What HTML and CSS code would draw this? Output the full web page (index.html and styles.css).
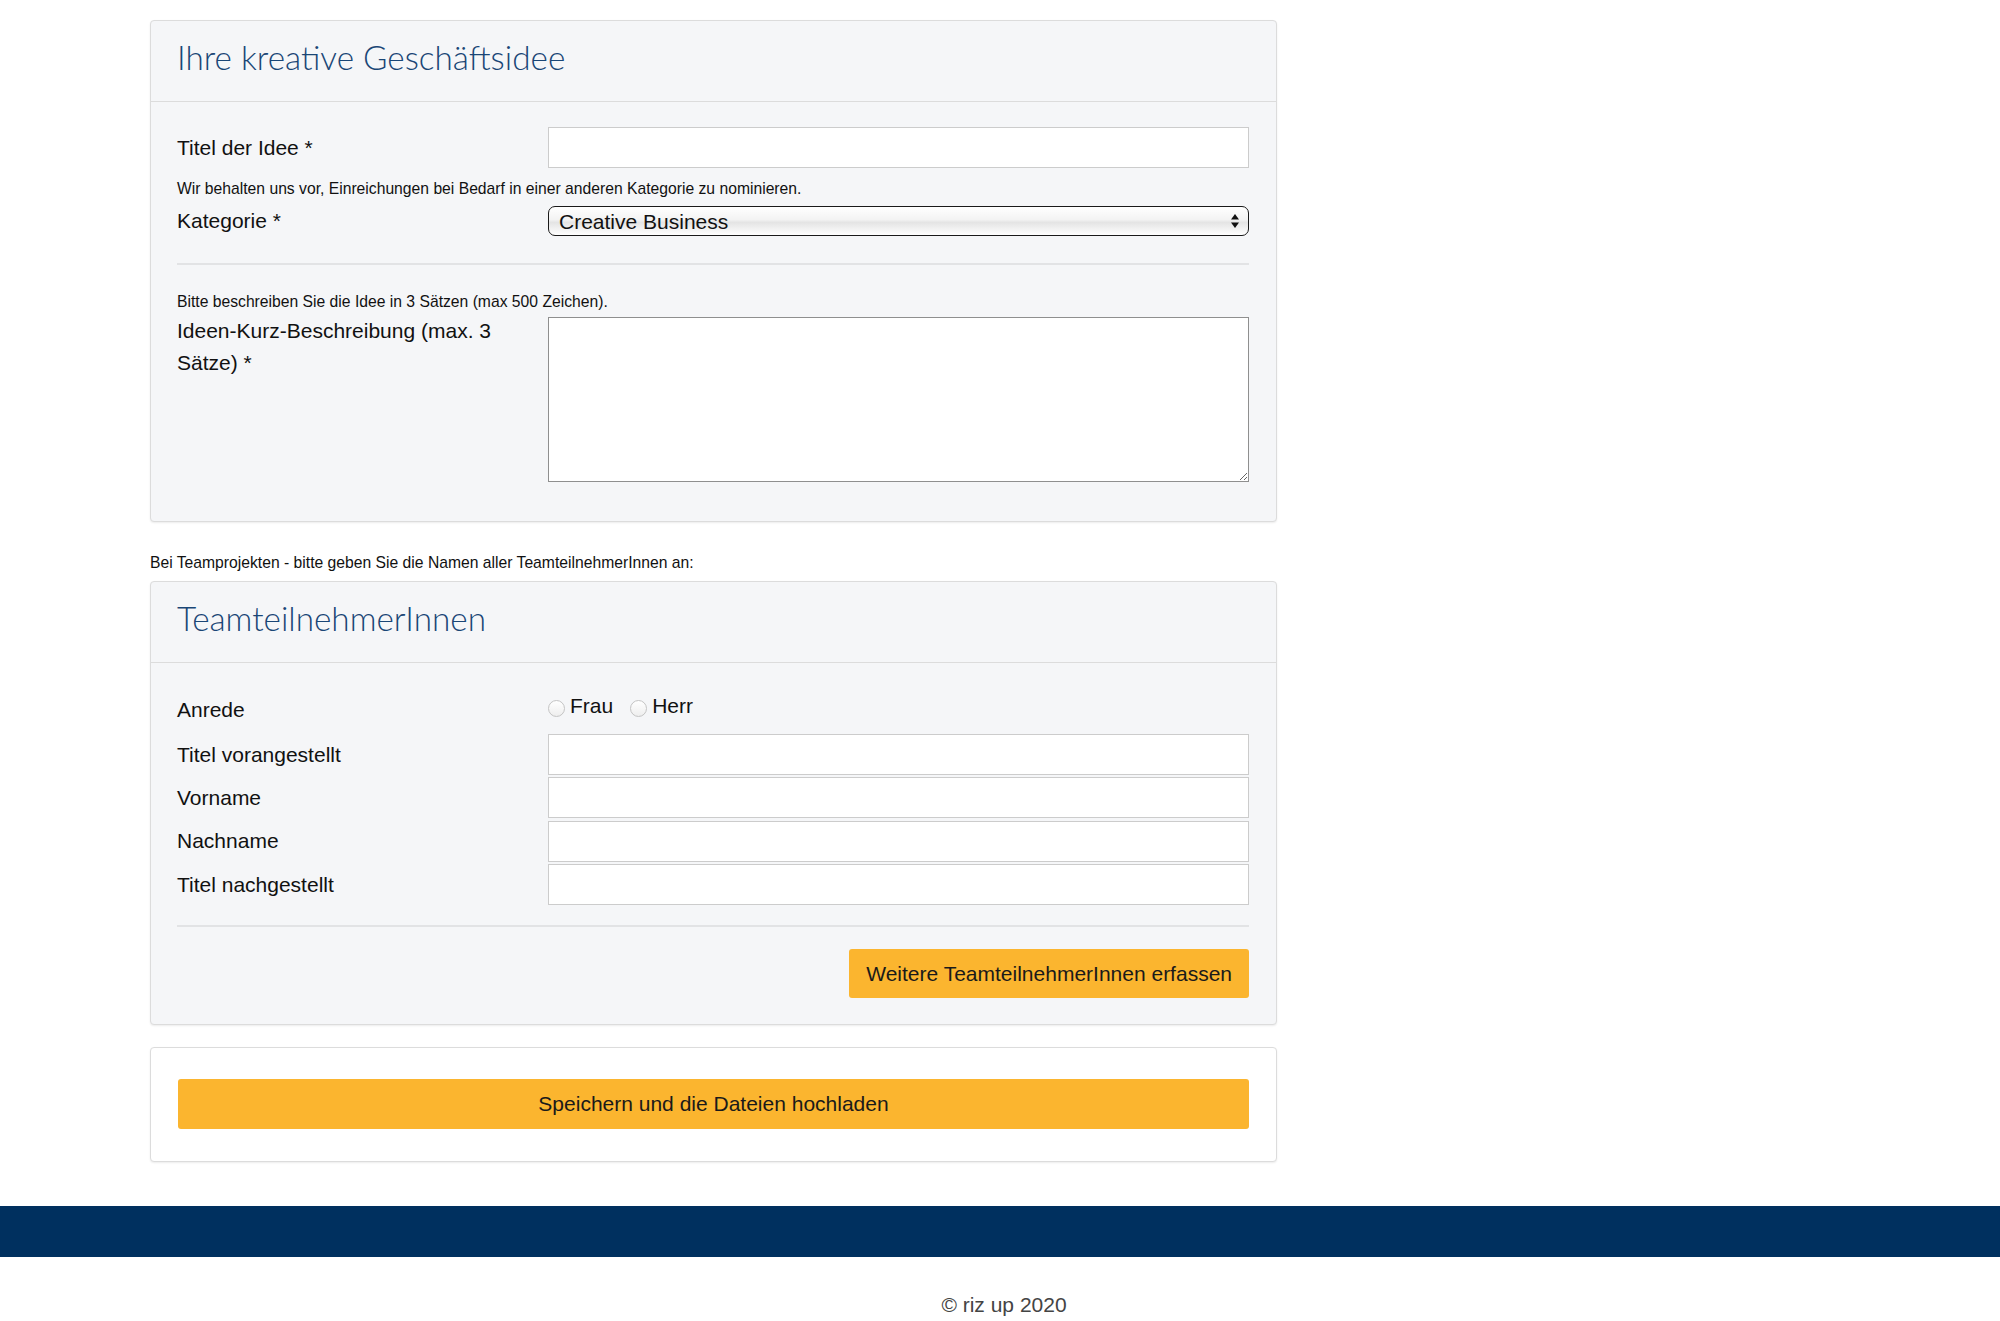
FILE: index.html
```html
<!DOCTYPE html>
<html lang="de">
<head>
    <meta charset="UTF-8">
    <meta name="viewport" content="width=device-width, initial-scale=1.0">
    <title>Ihre kreative Geschäftsidee</title>
    <link rel="stylesheet" href="styles.css">
</head>
<body>
    <div class="page">
        <!-- Idee -->
        <div class="panel">
            <div class="panel-heading">
                <h2>Ihre kreative Geschäftsidee</h2>
            </div>
            <div class="panel-body">
                <div class="form-row">
                    <label class="form-label">Titel der Idee *</label>
                    <input class="form-input" type="text">
                </div>
                <p class="hint hint-category">Wir behalten uns vor, Einreichungen bei Bedarf in einer anderen Kategorie zu nominieren.</p>
                <div class="form-row">
                    <label class="form-label">Kategorie *</label>
                    <div class="select-wrap">
                        <select class="form-select">
                            <option>Creative Business</option>
                        </select>
                        <svg class="select-arrows" width="10" height="16" viewBox="0 0 10 16">
                            <path d="M5 1 L9 6.5 L1 6.5 Z" fill="#111"/>
                            <path d="M5 15 L9 9.5 L1 9.5 Z" fill="#111"/>
                        </svg>
                    </div>
                </div>
                <hr class="divider">
                <p class="hint hint-text">Bitte beschreiben Sie die Idee in 3 Sätzen (max 500 Zeichen).</p>
                <div class="form-row form-row-top">
                    <label class="form-label">Ideen-Kurz-Beschreibung (max. 3 Sätze) *</label>
                    <textarea class="form-textarea"></textarea>
                </div>
            </div>
        </div>

        <p class="team-note">Bei Teamprojekten - bitte geben Sie die Namen aller TeamteilnehmerInnen an:</p>

        <!-- Team -->
        <div class="panel">
            <div class="panel-heading">
                <h2>TeamteilnehmerInnen</h2>
            </div>
            <div class="panel-body panel-body-team">
                <div class="form-row form-row-radio">
                    <label class="form-label">Anrede</label>
                    <div class="radio-group">
                        <label class="radio"><input type="radio" name="anrede">Frau</label>
                        <label class="radio"><input type="radio" name="anrede">Herr</label>
                    </div>
                </div>
                <div class="input-stack">
                    <div class="form-row">
                        <label class="form-label">Titel vorangestellt</label>
                        <input class="form-input" type="text">
                    </div>
                    <div class="form-row">
                        <label class="form-label">Vorname</label>
                        <input class="form-input" type="text">
                    </div>
                    <div class="form-row">
                        <label class="form-label">Nachname</label>
                        <input class="form-input" type="text">
                    </div>
                    <div class="form-row">
                        <label class="form-label">Titel nachgestellt</label>
                        <input class="form-input" type="text">
                    </div>
                </div>
                <hr class="divider divider-team">
                <div class="actions">
                    <button class="btn">Weitere TeamteilnehmerInnen erfassen</button>
                </div>
            </div>
        </div>

        <!-- Speichern -->
        <div class="panel panel-save">
            <button class="btn btn-block">Speichern und die Dateien hochladen</button>
        </div>
    </div>

    <div class="footer-band"></div>
    <p class="copyright">© riz up 2020</p>
</body>
</html>
```

FILE: styles.css
```css
body {
    margin: 0;
    padding: 0;
    background-color: #ffffff;
    color: #111;
    font-family: "Liberation Sans", Arial, sans-serif;
}

.page {
    width: 1127px;
    margin-left: 150px;
    padding-top: 20px;
}

.panel {
    background-color: #f5f6f8;
    border: 1px solid #dcdcdc;
    border-radius: 4px;
    box-shadow: 0 1px 2px rgba(0, 0, 0, 0.08);
}

.panel-heading {
    display: flex;
    align-items: center;
    padding: 0 26px;
    border-bottom: 1px solid #dcdcdc;
    box-sizing: border-box;
    height: 81px;
}

.panel-heading h2 {
    margin: 0 0 8px 0;
    font-family: Lato, "Noto Sans", sans-serif;
    font-weight: 300;
    font-size: 33.3px;
    color: #1a4676;
}

.panel-body {
    padding: 25px 27px 39px 26px;
}

.form-row {
    display: grid;
    grid-template-columns: 341px 1fr;
    column-gap: 30px;
    align-items: center;
}

.form-row-top {
    align-items: start;
}

.form-label {
    font-size: 21px;
    line-height: 32px;
}

.form-row-top .form-label {
    margin-top: -2px;
}

.form-input {
    height: 41px;
    box-sizing: border-box;
    border: 1px solid #cccccc;
    background: #ffffff;
    font-size: 20px;
    padding: 0 10px;
    margin: 0;
}

.hint {
    font-size: 15.7px;
    line-height: 20px;
    margin: 0;
}

.hint-category {
    margin-top: 11px;
    margin-bottom: 6px;
}

.hint-text {
    margin-bottom: 5px;
}

.select-wrap {
    position: relative;
}

.form-select {
    width: 100%;
    height: 30px;
    -webkit-appearance: none;
    appearance: none;
    border: 1.5px solid #1a1a1a;
    border-radius: 7px;
    background: linear-gradient(to bottom, #ffffff 0%, #f3f3f3 45%, #e4e4e4 55%, #ffffff 100%);
    font-family: "Liberation Sans", Arial, sans-serif;
    font-size: 21px;
    color: #111;
    padding: 0 30px 0 10px;
    margin: 0;
}

.select-arrows {
    position: absolute;
    right: 9px;
    top: 7px;
}

.divider {
    border: 0;
    border-top: 2px solid #e2e3e5;
    margin: 25.5px 0 27px 0;
}

.form-textarea {
    height: 165px;
    box-sizing: border-box;
    border: 1.5px solid #8f8f8f;
    background: #ffffff;
    margin: 0;
    resize: both;
}

.team-note {
    font-size: 15.7px;
    line-height: 20px;
    margin: 31px 0 8.5px 0;
}

.panel-body-team {
    padding: 25px 27px 26px 26px;
}

.form-row-radio {
    height: 43px;
    margin-bottom: 3px;
}

.radio-group {
    display: flex;
    gap: 17px;
    margin-top: -8px;
}

.radio {
    display: flex;
    align-items: center;
    font-size: 21px;
}

.radio input {
    -webkit-appearance: none;
    appearance: none;
    width: 17px;
    height: 17px;
    margin: 6px 5px 0 0;
    border: 1px solid #c4c4c4;
    border-radius: 50%;
    background: linear-gradient(to bottom, #ffffff, #eeeeee);
}

.input-stack {
    display: flex;
    flex-direction: column;
    gap: 2.4px;
}

.divider-team {
    margin: 20px 0 22px 0;
}

.actions {
    display: flex;
    justify-content: flex-end;
}

.btn {
    background-color: #fbb52f;
    border: none;
    border-radius: 3px;
    height: 49px;
    padding: 0 17px;
    font-family: "Liberation Sans", Arial, sans-serif;
    font-size: 21px;
    color: #1a1a1a;
    cursor: pointer;
}

.btn-block {
    width: 100%;
    height: 50px;
}

.panel-save {
    background-color: #ffffff;
    margin-top: 22px;
    padding: 31px 27px 32px 27px;
}

.footer-band {
    margin-top: 44px;
    height: 51px;
    background-color: #00305f;
}

.copyright {
    text-align: center;
    font-size: 21px;
    color: #444;
    margin: 36px 0 0 0;
    padding-left: 8px;
}
```
